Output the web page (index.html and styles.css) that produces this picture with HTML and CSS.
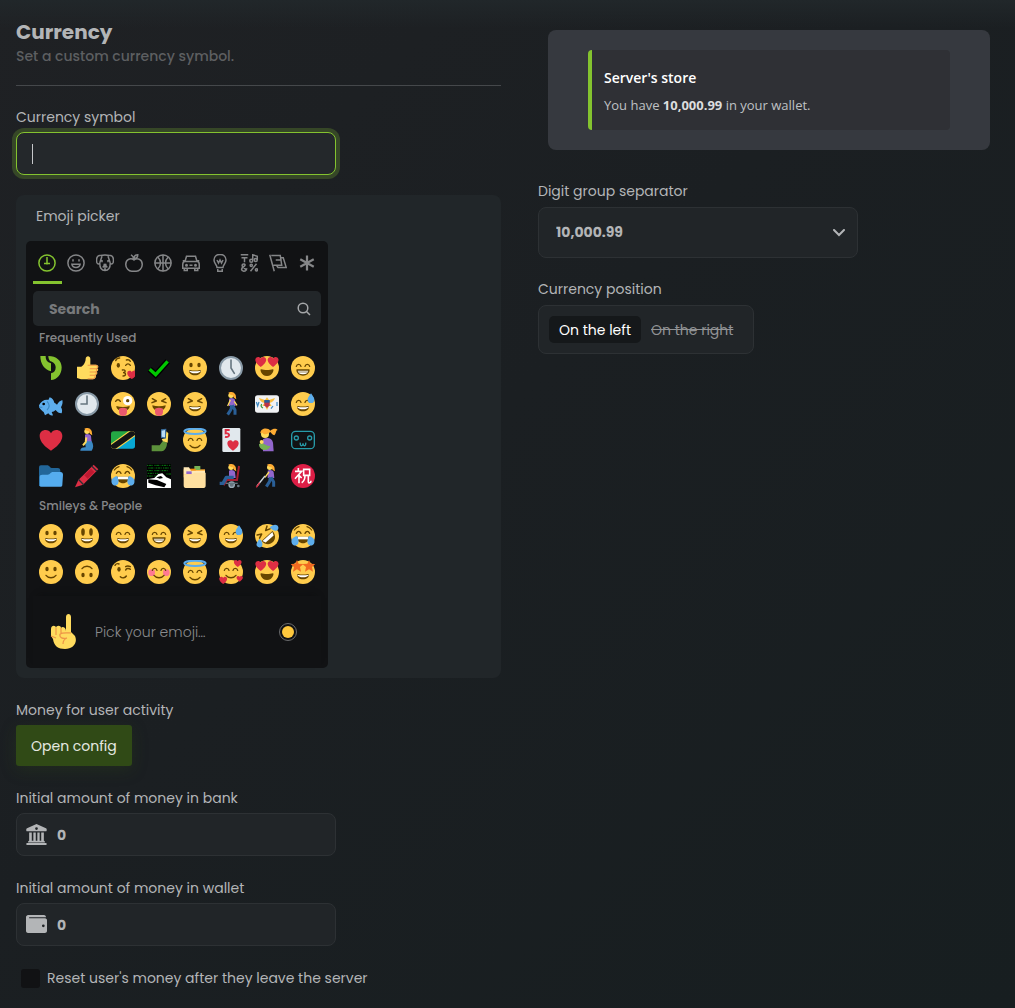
FILE: index.html
```html
<!DOCTYPE html>
<html lang="en">
<head>
<meta charset="utf-8">
<meta name="viewport" content="width=device-width, initial-scale=1">
<title>Currency</title>
<link rel="stylesheet" href="styles.css">
</head>
<body>
<svg class="sprite" aria-hidden="true">
  <defs>
    <g id="face"><circle cx="18" cy="18" r="18" fill="#ffcc4d"/></g>
    <g id="mouth">
      <path fill="#664500" d="M18 21.849c-2.966 0-4.935-.346-7.369-.819C10.075 20.923 9 21.03 9 22.394 9 25.12 12.400 29 18 29s9-3.880 9-6.606c0-1.364-1.075-1.471-1.631-1.364-2.435.473-4.403.819-7.369.819z"/>
      <path fill="#fff" d="M9 22s3 1 9 1 9-1 9-1-2 4-9 4-9-4-9-4z"/>
    </g>
    <g id="eyes" fill="#664500"><ellipse cx="12" cy="13.500" rx="2.500" ry="3.500"/><ellipse cx="24" cy="13.500" rx="2.500" ry="3.500"/></g>
    <g id="happy-eyes" fill="none" stroke="#664500" stroke-width="2" stroke-linecap="round"><path d="M8 15.500c1-4 6-4 7 0M21 15.500c1-4 6-4 7 0"/></g>
    <g id="squint-eyes" fill="none" stroke="#664500" stroke-width="2.200" stroke-linecap="round" stroke-linejoin="round"><path d="M8 10l6 3.500-6.500 2.500M28 10l-6 3.500 6.500 2.500"/></g>
    <g id="smile" fill="none" stroke="#664500" stroke-width="2" stroke-linecap="round"><path d="M10.500 23c3.500 4.800 11.500 4.800 15 0"/></g>
    <path id="heart" fill="#dd2e44" d="M18 34C10 29 1 21 1 12 1 2 14 0 18 8c4-8 17-6 17 4 0 9-9 17-17 22z"/>
    <path id="drop" fill="#5dadec" d="M30 2c-2.500 4-5 6.500-5 9.500a5 5 0 0 0 10 0C35 8.500 32.500 6 30 2z"/>
    <g id="halo" fill="none"><ellipse cx="18" cy="5" rx="16" ry="4" stroke="#5dadec" stroke-width="3"/></g>
    <path id="star" fill="#f26a21" d="M9 0l2.500 5.500 7 .500-5 4.500 1.500 7L9 14l-6 3.500 1.500-7L-1 6l7.500-.500z"/>
    <g id="woman">
      <circle cx="18" cy="5" r="4" fill="#ffdc5d"/>
      <path fill="#ffac33" d="M14 1c4-2 8-1 10 2 2 2 1 5 2 8-3-1-5-3-5-6-2 0-5-1-7-4z"/>
      <path fill="#9266cc" d="M15 10c3-2 8-1 9 2l1 9H15z"/>
    </g>
  </defs>

  <symbol id="e-logo" viewBox="0 0 36 36"><path fill="#84c32f" d="M2 0h8c0 6 2 9 8 11v12C8 20 2 12 2 0zM14 0c12 0 20 7 20 17 0 11-7 19-16 19V26c5-1 7-4 7-9s-4-8-8-9c-2-2-3-5-3-8z"/></symbol>
  <symbol id="e-thumb" viewBox="0 0 36 36"><path fill="#ffdb5e" d="M3 16h6c3-1 7-6 7-12 0-5 7-5 7 0v9h8c5 0 5 5 2 5 3 2 2 5-1 5 3 2 1 5-1 5 2 3-1 7-4 7H9l-6-2z"/><path fill="none" stroke="#ee9547" stroke-width="1.600" d="M19 14h13c3 1 2 5-1 5h-9M31 19c3 1 2 5-1 5h-8M31 24c2 1 1 5-2 5h-7M30 29c1 2-1 5-3 5h-8"/></symbol>
  <symbol id="e-kiss" viewBox="0 0 36 36"><use href="#face"/><ellipse cx="11" cy="14" rx="2.500" ry="3.500" fill="#664500"/><path fill="none" stroke="#664500" stroke-width="2" stroke-linecap="round" d="M22 14c2-3 5-3 7 0M7 7c1-3 4-4 6-4M23 6c3-1 5 0 6 2M17 21c6-1 5 4 1 4 5 0 5 5 0 5"/><use href="#heart" transform="translate(24 21) scale(.4)"/></symbol>
  <symbol id="e-check" viewBox="0 0 36 36"><path fill="none" stroke="#000" stroke-width="9" d="M4 20l9 8L31 8"/><path fill="none" stroke="#00c800" stroke-width="5" d="M4 20l9 8L31 8"/></symbol>
  <symbol id="e-grin" viewBox="0 0 36 36"><use href="#face"/><use href="#eyes"/><use href="#mouth"/></symbol>
  <symbol id="e-smiley" viewBox="0 0 36 36"><use href="#face"/><ellipse cx="12" cy="12" rx="2.700" ry="5.500" fill="#664500"/><ellipse cx="24" cy="12" rx="2.700" ry="5.500" fill="#664500"/><use href="#mouth"/></symbol>
  <symbol id="e-smile" viewBox="0 0 36 36"><use href="#face"/><use href="#happy-eyes"/><use href="#mouth"/></symbol>
  <symbol id="e-beam" viewBox="0 0 36 36"><use href="#face"/><use href="#happy-eyes"/><path fill="#fff" stroke="#664500" stroke-width="2" stroke-linejoin="round" d="M9 21h18c0 10-18 10-18 0z"/><path stroke="#664500" d="M10 24h16"/></symbol>
  <symbol id="e-laugh" viewBox="0 0 36 36"><use href="#face"/><use href="#squint-eyes"/><use href="#mouth"/></symbol>
  <symbol id="e-sweat" viewBox="0 0 36 36"><use href="#face"/><use href="#happy-eyes"/><use href="#mouth"/><use href="#drop"/></symbol>
  <symbol id="e-clock5" viewBox="0 0 36 36"><circle cx="18" cy="18" r="16.500" fill="#e1e8ed" stroke="#8899a6" stroke-width="3"/><path fill="none" stroke="#66757f" stroke-width="2.400" stroke-linecap="round" d="M18 6v12l5 8"/></symbol>
  <symbol id="e-clock9" viewBox="0 0 36 36"><circle cx="18" cy="18" r="16.500" fill="#e1e8ed" stroke="#8899a6" stroke-width="3"/><path fill="none" stroke="#66757f" stroke-width="2.400" stroke-linecap="round" d="M18 6v12H9"/></symbol>
  <symbol id="e-hearteyes" viewBox="0 0 36 36"><use href="#face"/><use href="#heart" transform="translate(0 0) scale(.48)"/><use href="#heart" transform="translate(18.500 0) scale(.48)"/><path fill="#664500" d="M9 20c5 1.500 13 1.500 18 0 2 0 0 10-9 10S7 20 9 20z"/></symbol>
  <symbol id="e-fish" viewBox="0 0 36 36"><path fill="#5dadec" d="M0 20c3-6 8-9 14-8l2-4c4 1 6 4 7 8 2 1 3 2 4 3 2-4 5-6 8-7 1 4 0 7-2 11 2 3 2 6 1 9-4 0-7-2-9-5-2 2-4 3-6 3l2 5c-3 1-6-1-7-3l-5 3-2-5C4 28 0 25 0 20z"/><circle cx="7" cy="18" r="2"/><path fill="none" stroke="#3b88c3" stroke-width="1.600" d="M12 14c4 4 4 9 0 13M0 23h5"/></symbol>
  <symbol id="e-winktongue" viewBox="0 0 36 36"><use href="#face"/><path fill="none" stroke="#664500" stroke-width="2.200" stroke-linecap="round" d="M7 14c2-3 5-3 7 0"/><circle cx="25" cy="13" r="7" fill="#fff"/><circle cx="25" cy="13" r="2.500" fill="#664500"/><path fill="#664500" d="M8 21c6 2 14 2 20 0 0 10-20 10-20 0z"/><path fill="#ea596e" d="M12 25c4-2 8-2 12 0v5c0 8-12 8-12 0z"/></symbol>
  <symbol id="e-tongue" viewBox="0 0 36 36"><use href="#face"/><use href="#squint-eyes"/><path fill="#664500" d="M8 20c6 2 14 2 20 0 0 11-20 11-20 0z"/><path fill="#ea596e" d="M12 25c4-2 8-2 12 0v5c0 8-12 8-12 0z"/></symbol>
  <symbol id="e-walk" viewBox="0 0 36 36"><use href="#woman"/><path fill="none" stroke="#2a5f97" stroke-width="4.500" stroke-linejoin="round" d="M19 20l-1 6-5 8M20 20l4 7v7"/><path fill="none" stroke="#ffdc5d" stroke-width="2" d="M17 12l-4 9M23 14l4 6"/></symbol>
  <symbol id="e-vi" viewBox="0 0 36 36"><rect y="5" width="36" height="26" rx="4" fill="#f1f2f4"/><path fill="#fbbe3c" d="M6 9l9 3 3-4 3 4 9-3c-2 5-5 7-8 7l3 5h-4l-3 6-3-6h-4l3-5c-4 0-6-2-8-7z"/><path fill="#b9324b" d="M14 13h8v7l-4 4-4-4z"/><path fill="#2a5f97" d="M14 12h8v4h-8z"/><path stroke="#3b88c3" stroke-width="1.800" fill="none" d="M2 15l2 6 2-6M33 15v6M24 25l3-4"/><path fill="none" stroke="#3f9b42" stroke-width="2" d="M10 18c-2 3 0 5 2 6"/></symbol>
  <symbol id="e-heart" viewBox="0 0 36 36"><use href="#heart"/></symbol>
  <symbol id="e-kneel" viewBox="0 0 36 36"><use href="#woman"/><path fill="#3b88c3" d="M15 20h10c3 5 3 10 0 14H8c0-4 4-5 8-5z"/><path fill="none" stroke="#ffdc5d" stroke-width="3" d="M17 14l-1 7-4 5"/></symbol>
  <symbol id="e-tz" viewBox="0 0 36 36"><clipPath id="flag"><rect y="5" width="36" height="26" rx="4"/></clipPath><g clip-path="url(#flag)"><path fill="#24a844" d="M0 0h36L0 30z"/><path fill="#08a8d4" d="M0 36h36V6z"/><path stroke="#fbd449" stroke-width="12" d="M-3 33L39 3"/><path stroke="#141414" stroke-width="8.500" d="M-3 33L39 3"/></g></symbol>
  <symbol id="e-selfie" viewBox="0 0 36 36"><path fill="#5c913b" d="M7 35V26h12l5-7 6 3c0 7-3 12-8 13z"/><path fill="#ffdc5d" d="M22 17l6-2 1-10 3 3-1 14-7-2z"/><path fill="#3b6f9f" d="M21 2l8-1-1 15-7-1z"/><path fill="#bbddf5" d="M22 4l5-1v11l-5-1z"/></symbol>
  <symbol id="e-angel" viewBox="0 0 36 36"><use href="#face"/><use href="#halo"/><g transform="translate(0 3)"><use href="#happy-eyes"/><use href="#smile"/></g></symbol>
  <symbol id="e-card" viewBox="0 0 36 36"><rect x="5" width="27" height="36" rx="2" fill="#e1e8ed"/><path fill="none" stroke="#dd2e44" stroke-width="3" d="M16 3h-6v5c7-1 7 7-1 5"/><use href="#heart" transform="translate(12 17) scale(.5)"/></symbol>
  <symbol id="e-feed" viewBox="0 0 36 36"><path fill="#9266cc" d="M12 17c6-4 14-2 15 5l1 13H12z"/><circle cx="15" cy="9" r="6" fill="#ffdc5d"/><path fill="#ffac33" d="M8 8C8-1 20-1 23 4c5-4 9-3 11-1-3 0-2 5-5 8-3-1-4-3-6-5-3 3-9 5-12 1z"/><path fill="#77b255" d="M6 24c7-4 9 3 17 3-2 9-17 8-17-3z"/><circle cx="10" cy="21" r="3" fill="#ffdc5d"/></symbol>
  <symbol id="e-robot" viewBox="0 0 36 36"><g fill="none" stroke="#279aa8" stroke-width="2"><rect x="1" y="5" width="34" height="26" rx="6"/><circle cx="8" cy="15" r="3"/><circle cx="28" cy="15" r="3"/><path d="M14 22c-1 6 4 6 4 1 0 5 5 5 4-1"/></g></symbol>
  <symbol id="e-folder" viewBox="0 0 36 36"><path fill="#226699" d="M0 33V6c0-3 1-4 3-4h9c4 0 4 4 7 4h9c3 0 4 2 4 4v23z"/><path fill="#55acee" d="M1 33V20c0-3 1-4 4-4h8c4 0 4-4 8-4h11c3 0 4 2 4 4l-1 15c0 2-1 3-3 3H3c-2 0-2-1-2-1z"/></symbol>
  <symbol id="e-crayon" viewBox="0 0 36 36"><path fill="#dd2e44" d="M0 35l5-11L28 1l7 7-23 23z"/><path fill="#be1931" d="M14 17l10-10 5 5-10 10z"/><path stroke="#292f33" stroke-width="2" d="M5 23l8 8M25 3l8 8"/></symbol>
  <symbol id="e-joy" viewBox="0 0 36 36"><use href="#face"/><path fill="none" stroke="#664500" stroke-width="2" stroke-linecap="round" d="M8 14c2-4 5-4 7 0M21 14c2-4 5-4 7 0M5 9c2-3 4-4 7-5M24 4c3 1 5 2 7 5"/><path fill="#664500" d="M9 19h18c1 13-19 13-18 0z"/><path fill="#fff" d="M10 19h16v4H10z"/><path fill="#5dadec" d="M9 18c-7 2-9 6-8 10 1 5 8 6 10 1 1-3 0-7-2-11zM27 18c7 2 9 6 8 10-1 5-8 6-10 1-1-3 0-7 2-11z"/></symbol>
  <symbol id="e-glitch" viewBox="0 0 36 36"><path d="M0 0h36v36H0z"/><path stroke="#087a12" stroke-width="1.500" stroke-dasharray="2 1 4 1 1 2" d="M0 2h36M2 6h34M0 10h33M1 14h16M0 18h15M29 15h7"/><path fill="#fff" d="M0 23l11-2 6-6 6-1 6 6 7 3v13H0z"/><path d="M2 23l13 1 14 6-3 5-13-3-11-4zM14 20l5 2 5-1-3-3z"/></symbol>
  <symbol id="e-dividers" viewBox="0 0 36 36"><path fill="#ffac33" d="M1 8h32v12H1z"/><path fill="#77b255" d="M17 3h9v6h-9z"/><path fill="#f4900c" d="M10 7h9v6h-9z"/><path fill="#ffe8b6" d="M1 5h8l3 5h21v6H1z"/><path fill="#9266cc" d="M5 11h8v4H5z"/><path fill="#ffe0a0" d="M1 16h12l4-3h17v19c0 3-1 4-3 4H4c-2 0-3-1-3-4z"/></symbol>
  <symbol id="e-chair" viewBox="0 0 36 36"><path fill="none" stroke="#a51c30" stroke-width="3" d="M30 3l-3 21H12l-5 8"/><use href="#woman"/><path fill="none" stroke="#2a5f97" stroke-width="5" stroke-linejoin="round" d="M22 20H11L6 29H1"/><circle cx="19" cy="31" r="4" fill="#66757f" stroke="#99aab5" stroke-width="2"/><circle cx="29" cy="33" r="2" fill="#66757f"/><path stroke="#66757f" stroke-width="2" d="M10 29h18"/></symbol>
  <symbol id="e-cane" viewBox="0 0 36 36"><g transform="translate(4 0)"><use href="#woman"/><path fill="none" stroke="#2a5f97" stroke-width="4.500" stroke-linejoin="round" d="M19 20l-1 6-5 8M20 20l4 7v7"/><path fill="none" stroke="#ffdc5d" stroke-width="2" d="M17 12l-6 8"/></g><path stroke="#ccd6dd" stroke-width="2" d="M15 18L3 33"/><path stroke="#dd2e44" stroke-width="2" d="M7 28l-5 7"/></symbol>
  <symbol id="e-congrats" viewBox="0 0 36 36"><circle cx="18" cy="18" r="18" fill="#dd1e46"/><g fill="none" stroke="#fff" stroke-width="2.400"><path d="M11 6v4M6 11h10L6 22M12 16v13M12 17l4 4M19 8h9v9h-9zM21 17c0 6-1 9-5 11M26 17v10c0 2 4 2 4-2"/></g></symbol>
  <symbol id="e-rofl" viewBox="0 0 36 36"><g transform="rotate(-42 18 18)"><use href="#face"/><g transform="translate(0 -3)"><use href="#squint-eyes"/></g><path fill="#664500" d="M7 18h22c0 17-22 17-22 0z"/><path fill="#fff" d="M8 19h20l-2 5H10z"/></g><path fill="#5dadec" d="M7 22c-3 4-6 8-4 11 2 3 7 3 8-1 1-3-1-7-4-10zM22 5c4-3 8-5 11-3 3 2 3 7-1 8-3 1-7-2-10-5z"/></symbol>
  <symbol id="e-slight" viewBox="0 0 36 36"><use href="#face"/><use href="#eyes"/><use href="#smile"/></symbol>
  <symbol id="e-upside" viewBox="0 0 36 36"><g transform="rotate(180 18 18)"><use href="#face"/><use href="#eyes"/><use href="#smile"/></g></symbol>
  <symbol id="e-wink" viewBox="0 0 36 36"><use href="#face"/><ellipse cx="12" cy="14" rx="2.500" ry="3.500" fill="#664500"/><path fill="none" stroke="#664500" stroke-width="2.200" stroke-linecap="round" d="M22 15c1-3 5-3 7-1M6 8c1-2 4-3 6-2M22 10c3-2 5-1 7 0M14 25c3 3 7 2 9-1"/></symbol>
  <symbol id="e-blush" viewBox="0 0 36 36"><use href="#face"/><circle cx="7" cy="19" r="5" fill="#ff7892"/><circle cx="29" cy="19" r="5" fill="#ff7892"/><use href="#happy-eyes"/><use href="#smile"/></symbol>
  <symbol id="e-love" viewBox="0 0 36 36"><use href="#face"/><use href="#happy-eyes"/><use href="#smile"/><use href="#heart" transform="translate(22 -1) scale(.34)"/><use href="#heart" transform="translate(0 24) scale(.35)"/><use href="#heart" transform="translate(26 23) scale(.28)"/></symbol>
  <symbol id="e-stars" viewBox="0 0 36 36"><use href="#face"/><use href="#star"/><use href="#star" transform="translate(18 0)"/><use href="#mouth"/></symbol>
  <symbol id="e-point" viewBox="0 0 36 36"><path fill="#ffdb5e" d="M20 17V3c0-4 5-4 5 0v15l4 4c3 7-2 13-10 13C12 35 8 32 7 25l-2-3v-7c0-4 5-4 5-1 0-3 5-3 5 0 1-2 5-1 5 3z"/><path fill="none" stroke="#ee9547" stroke-width="1.200" d="M10 14v7M15 14v6M14 20c3-2 9-1 11-1M14 20c-1 4 3 5 7 4-3 1-4 3-4 6M5 22l5 2"/></symbol>
</svg>

<main class="settings">
  <section class="column">
    <header class="heading">
      <h1 class="title">Currency</h1>
      <p class="subtitle">Set a custom currency symbol.</p>
    </header>

    <div class="field field-first">
      <label class="label" for="symbol">Currency symbol</label>
      <input class="control symbol" id="symbol" type="text">
    </div>

    <div class="panel">
      <h2 class="panel-title">Emoji picker</h2>
      <div class="picker">
        <nav class="tabs" aria-label="Emoji categories">
          <button class="tab tab-active" aria-label="Frequently used"><svg viewBox="0 0 24 24"><circle cx="12" cy="12" r="10.800"/><path d="M12 4v10M8 12.500h8"/></svg></button>
          <button class="tab" aria-label="Smileys"><svg viewBox="0 0 24 24"><circle cx="12" cy="12" r="10.800"/><path d="M8 7v3M16 7v3M6.500 13.500h11c-1 6-10 6-11 0z"/></svg></button>
          <button class="tab" aria-label="Animals"><svg viewBox="0 0 24 24"><path d="M6 2C2 1 0 6 1 11c1 3 3 3 4 1L8 3M18 2c4-1 6 4 5 9-1 3-3 3-4 1l-3-9M6 2c4-1 8-1 12 0M5 12c0 7 3 10 7 10s7-3 7-10M8 8v3M16 8v3M9 18l3-4 3 4M12 14v8M10 14h4"/></svg></button>
          <button class="tab" aria-label="Food"><svg viewBox="0 0 24 24"><path d="M12 8c-5-4-11 0-11 6 0 5 4 9 8 9 2 0 4 0 6 0 4 0 8-4 8-9 0-6-6-10-11-6zM12 8c0-3-1-5-4-7M12 6c0-3 2-5 5-5 0 3-2 5-5 5z"/></svg></button>
          <button class="tab" aria-label="Sports"><svg viewBox="0 0 24 24"><circle cx="12" cy="12" r="10.800"/><path d="M12 1v22M1 12h22M5 4c5 5 5 11 0 16M19 4c-5 5-5 11 0 16"/></svg></button>
          <button class="tab" aria-label="Travel"><svg viewBox="0 0 24 24"><path d="M4 10L6 3h12l2 7c2 0 3 2 3 4v5H1v-5c0-2 1-4 3-4zM4 10h16M1 9h3M20 9h3M3 19v3h4v-3M17 19v3h4v-3M10 15h4"/><circle cx="6" cy="15" r="1"/><circle cx="18" cy="15" r="1"/></svg></button>
          <button class="tab" aria-label="Objects"><svg viewBox="0 0 24 24"><path d="M8 18c0-4-4-5-4-10 0-10 16-10 16 0 0 5-4 6-4 10zM9 20v3h6v-3M8 8l2 4 2-4 2 4 2-4"/></svg></button>
          <button class="tab" aria-label="Symbols"><svg viewBox="0 0 24 24"><path d="M1 1h10M2 5h8M6 5v6M17 8V1l6 2v5M9 22L3 16c-1-4 6-3 3 0-5 3-5 6-1 7 3 0 4-3 4-4M14 23l8-10"/><circle cx="15" cy="9" r="2"/><circle cx="21" cy="8" r="2"/><circle cx="15" cy="15" r="1.500"/><circle cx="22" cy="21" r="1.500"/></svg></button>
          <button class="tab" aria-label="Flags"><svg viewBox="0 0 24 24"><path d="M1 1l6 22M3 2h12l2 13H6M15 5h4l4 13H12l-2-3M9 8h8"/></svg></button>
          <button class="tab" aria-label="Custom"><svg class="bold" viewBox="0 0 24 24"><path d="M12 2v20M3 7l18 10M21 7L3 17"/></svg></button>
        </nav>
        <div class="search">
          <input class="search-input" type="search" placeholder="Search" aria-label="Search emoji">
          <svg class="search-icon" viewBox="0 0 14 14"><circle cx="6" cy="6" r="4.800"/><path d="M9.500 9.500L13 13"/></svg>
        </div>
        <h3 class="group">Frequently Used</h3>
        <div class="grid">
          <button class="emoji" aria-label="logo"><svg><use href="#e-logo"/></svg></button>
          <button class="emoji" aria-label="thumbs up"><svg><use href="#e-thumb"/></svg></button>
          <button class="emoji" aria-label="kiss"><svg><use href="#e-kiss"/></svg></button>
          <button class="emoji" aria-label="check"><svg><use href="#e-check"/></svg></button>
          <button class="emoji" aria-label="grinning"><svg><use href="#e-grin"/></svg></button>
          <button class="emoji" aria-label="five o'clock"><svg><use href="#e-clock5"/></svg></button>
          <button class="emoji" aria-label="heart eyes"><svg><use href="#e-hearteyes"/></svg></button>
          <button class="emoji" aria-label="beaming"><svg><use href="#e-beam"/></svg></button>
          <button class="emoji" aria-label="fish"><svg><use href="#e-fish"/></svg></button>
          <button class="emoji" aria-label="nine o'clock"><svg><use href="#e-clock9"/></svg></button>
          <button class="emoji" aria-label="winking tongue"><svg><use href="#e-winktongue"/></svg></button>
          <button class="emoji" aria-label="squinting tongue"><svg><use href="#e-tongue"/></svg></button>
          <button class="emoji" aria-label="laughing"><svg><use href="#e-laugh"/></svg></button>
          <button class="emoji" aria-label="woman walking"><svg><use href="#e-walk"/></svg></button>
          <button class="emoji" aria-label="Virgin Islands flag"><svg><use href="#e-vi"/></svg></button>
          <button class="emoji" aria-label="sweat smile"><svg><use href="#e-sweat"/></svg></button>
          <button class="emoji" aria-label="heart"><svg><use href="#e-heart"/></svg></button>
          <button class="emoji" aria-label="woman kneeling"><svg><use href="#e-kneel"/></svg></button>
          <button class="emoji" aria-label="Tanzania flag"><svg><use href="#e-tz"/></svg></button>
          <button class="emoji" aria-label="selfie"><svg><use href="#e-selfie"/></svg></button>
          <button class="emoji" aria-label="halo"><svg><use href="#e-angel"/></svg></button>
          <button class="emoji" aria-label="five of hearts"><svg><use href="#e-card"/></svg></button>
          <button class="emoji" aria-label="feeding baby"><svg><use href="#e-feed"/></svg></button>
          <button class="emoji" aria-label="robot"><svg><use href="#e-robot"/></svg></button>
          <button class="emoji" aria-label="folder"><svg><use href="#e-folder"/></svg></button>
          <button class="emoji" aria-label="crayon"><svg><use href="#e-crayon"/></svg></button>
          <button class="emoji" aria-label="joy"><svg><use href="#e-joy"/></svg></button>
          <button class="emoji" aria-label="hacker"><svg><use href="#e-glitch"/></svg></button>
          <button class="emoji" aria-label="dividers"><svg><use href="#e-dividers"/></svg></button>
          <button class="emoji" aria-label="woman in wheelchair"><svg><use href="#e-chair"/></svg></button>
          <button class="emoji" aria-label="woman with cane"><svg><use href="#e-cane"/></svg></button>
          <button class="emoji" aria-label="congratulations"><svg><use href="#e-congrats"/></svg></button>
        </div>
        <h3 class="group">Smileys &amp; People</h3>
        <div class="grid">
          <button class="emoji" aria-label="grinning"><svg><use href="#e-grin"/></svg></button>
          <button class="emoji" aria-label="smiley"><svg><use href="#e-smiley"/></svg></button>
          <button class="emoji" aria-label="smile"><svg><use href="#e-smile"/></svg></button>
          <button class="emoji" aria-label="beaming"><svg><use href="#e-beam"/></svg></button>
          <button class="emoji" aria-label="laughing"><svg><use href="#e-laugh"/></svg></button>
          <button class="emoji" aria-label="sweat smile"><svg><use href="#e-sweat"/></svg></button>
          <button class="emoji" aria-label="rolling"><svg><use href="#e-rofl"/></svg></button>
          <button class="emoji" aria-label="joy"><svg><use href="#e-joy"/></svg></button>
          <button class="emoji" aria-label="slight smile"><svg><use href="#e-slight"/></svg></button>
          <button class="emoji" aria-label="upside down"><svg><use href="#e-upside"/></svg></button>
          <button class="emoji" aria-label="wink"><svg><use href="#e-wink"/></svg></button>
          <button class="emoji" aria-label="blush"><svg><use href="#e-blush"/></svg></button>
          <button class="emoji" aria-label="halo"><svg><use href="#e-angel"/></svg></button>
          <button class="emoji" aria-label="smiling with hearts"><svg><use href="#e-love"/></svg></button>
          <button class="emoji" aria-label="heart eyes"><svg><use href="#e-hearteyes"/></svg></button>
          <button class="emoji" aria-label="star struck"><svg><use href="#e-stars"/></svg></button>
        </div>
        <div class="preview">
          <svg class="preview-emoji"><use href="#e-point"/></svg>
          <span class="preview-text">Pick your emoji…</span>
          <button class="tone" aria-label="Skin tone"></button>
        </div>
      </div>
    </div>

    <div class="field">
      <span class="label">Money for user activity</span>
      <button class="open-config">Open config</button>
    </div>

    <div class="field">
      <label class="label" for="bank">Initial amount of money in bank</label>
      <div class="control with-icon">
        <svg class="icon" viewBox="0 0 20 20"><path fill-rule="evenodd" d="M10 0l9 4c1 0 1 3 0 3H1C0 7 0 4 1 4zM10 3a1.300 1.300 0 1 0 0 2.600A1.300 1.300 0 0 0 10 3zM3 8h2.500v8H7V8h2.300v8h1.500V8H13v8h1.500V8H17v8c1 0 1 1 1 1.500H2c0-.500 0-1.500 1-1.500zM1 18h18c1 0 1 2 0 2H1c-1 0-1-2 0-2z"/></svg>
        <input class="amount" id="bank" type="text" inputmode="numeric" value="0">
      </div>
    </div>

    <div class="field">
      <label class="label" for="wallet">Initial amount of money in wallet</label>
      <div class="control with-icon">
        <svg class="icon" viewBox="0 0 20 20"><path fill-rule="evenodd" d="M2 1h15c1.500 0 2 1 2 2H3v1h15c1.500 0 2 1 2 2v10c0 1.500-1 2-2 2H2c-1.500 0-2-1-2-2V3c0-1 1-2 2-2zM16.500 10a1.300 1.300 0 1 0 0 2.600 1.300 1.300 0 0 0 0-2.600z"/></svg>
        <input class="amount" id="wallet" type="text" inputmode="numeric" value="0">
      </div>
    </div>

    <label class="check-row"><input class="check" type="checkbox">Reset user's money after they leave the server</label>
  </section>

  <section class="column column-side">
    <div class="message">
      <article class="embed">
        <h2 class="embed-title">Server's store</h2>
        <p class="embed-text">You have <strong>10,000.99</strong> in your wallet.</p>
      </article>
    </div>

    <div class="field field-side">
      <label class="label" for="separator">Digit group separator</label>
      <div class="select-wrap">
        <select class="control select" id="separator"><option>10,000.99</option></select>
        <svg class="chevron" viewBox="0 0 12 8"><path d="M1 1l5 5 5-5"/></svg>
      </div>
    </div>

    <div class="field field-side">
      <span class="label" id="position-label">Currency position</span>
      <div class="segment" role="group" aria-labelledby="position-label">
        <button class="option option-active" aria-pressed="true">On the left</button>
        <button class="option" aria-pressed="false">On the right</button>
      </div>
    </div>
  </section>
</main>
</body>
</html>
```

FILE: styles.css
```css
* { box-sizing: border-box; }

body {
  margin: 0;
  min-height: 100vh;
  color: #b3b5b7;
  background:
    linear-gradient(180deg, #21272a, transparent 28px),
    linear-gradient(135deg, #1f2124 0%, #1b1f22 45%, #171e20 100%);
  font-family: Poppins, Inter, "Liberation Sans", sans-serif;
  font-size: 14px;
  line-height: 20px;
}

button, input, select { font: inherit; color: inherit; }
button { padding: 0; border: 0; background: none; cursor: pointer; }
h1, h2, h3, p { margin: 0; }

.sprite { position: absolute; width: 0; height: 0; }

.settings {
  display: grid;
  grid-template-columns: 485fr 462fr;
  gap: 37px;
  padding: 20px 15px 20px 16px;
}
.column { display: flex; flex-direction: column; align-items: stretch; }
.column-side { padding-top: 10px; }

.heading { padding-bottom: 17px; border-bottom: 1px solid #45484b; }
.title { font-size: 20px; line-height: 24px; font-weight: 700; color: #b3b5b7; }
.subtitle { line-height: 24px; font-weight: 500; color: #5d5f61; }

.field { display: flex; flex-direction: column; align-items: flex-start; gap: 5px; margin-top: 22px; }
.field-first { margin-top: 21px; }
.field-side { margin-top: 21px; gap: 6px; }
.message + .field-side { margin-top: 31px; }

.control {
  width: 320px;
  max-width: 100%;
  height: 43px;
  border: 1px solid #2d3134;
  border-radius: 8px;
  background: #212528;
}
.symbol {
  padding: 0 16px;
  border-color: #84c32f;
  outline: 0;
  box-shadow: 0 0 0 4px #364727;
  background: #24282b linear-gradient(#c6c8ca, #c6c8ca) 15px center / 1px 20px no-repeat;
}

.panel { margin-top: 20px; padding: 10px; border-radius: 8px; background: #212629; }
.panel-title { padding: 1px 10px 15px; font-size: 14px; line-height: 20px; font-weight: 400; }
.picker { width: 302px; padding: 0 7px; border-radius: 5px; background: #111214; }

.tabs { display: flex; margin-bottom: 7px; }
.tab { flex: 1; height: 43px; display: grid; place-items: center; border-bottom: 3px solid transparent; color: #858688; padding-top: 3px; }
.tab-active { border-color: #84c32f; color: #84c32f; }
.tab svg { width: 18px; height: 18px; fill: none; stroke: currentColor; stroke-width: 2; }
.tab .bold { stroke-width: 3; }

.search { display: flex; align-items: center; height: 35px; padding: 0 10px 0 16px; border-radius: 5px; background: #222629; }
.search-input { flex: 1; min-width: 0; padding: 0; border: 0; outline: 0; background: none; font-weight: 700; appearance: none; }
.search-input::placeholder { color: #77797b; opacity: 1; }
.search-icon { width: 14px; height: 14px; fill: none; stroke: #a5a7a9; stroke-width: 1.5; }

.group { padding-left: 6px; font-size: 12px; line-height: 24px; font-weight: 500; color: #858688; }
.grid { display: grid; grid-template-columns: repeat(8, 1fr); grid-auto-rows: 36px; }
.emoji { display: grid; place-items: center; }
.emoji svg { width: 24px; height: 24px; }

.preview { display: flex; align-items: center; gap: 13px; height: 72px; margin-top: 6px; padding: 0 24px 0 13px; box-shadow: 0 -4px 8px -6px #0a0b0c; }
.preview-emoji { width: 36px; height: 36px; }
.preview-text { flex: 1; color: #8a8b8d; font-weight: 300; }
.tone { width: 18px; height: 18px; border: 1px solid #6a6b6d; border-radius: 50%; background: #ffc83d; background-clip: content-box; padding: 2px; }

.open-config { height: 41px; padding: 0 15px; border-radius: 3px; background: #304a16; color: #e6e9e2; box-shadow: 0 4px 16px rgba(48, 74, 22, .3); }

.with-icon { display: flex; align-items: center; gap: 10px; padding: 0 9px; }
.icon { width: 21px; height: 21px; fill: #b3b5b7; }
.amount { flex: 1; min-width: 0; padding: 0; border: 0; outline: 0; background: none; font-weight: 700; }

.check-row { display: flex; align-items: center; gap: 7px; margin-top: 22px; padding-left: 5px; }
.check { appearance: none; width: 19px; height: 19px; margin: 0; border-radius: 3px; background: #111214; }

.message { margin: 0 10px; padding: 20px 40px; border-radius: 8px; background: #36393f; }
.embed { height: 80px; padding: 17px 12px; border-left: 4px solid #84c32f; border-radius: 4px; background: #2f3035; font-family: "Open Sans", "Noto Sans", sans-serif; }
.embed-title { font-size: 14px; line-height: 22px; font-weight: 600; color: #fff; }
.embed-text { margin-top: 6px; font-size: 13px; line-height: 20px; color: #bfc1c4; }
.embed-text strong { color: #dcddde; }

.select-wrap { display: grid; align-items: center; width: 320px; max-width: 100%; }
.select { grid-area: 1 / 1; height: 51px; padding: 0 17px 2px; appearance: none; font-weight: 700; }
.chevron { grid-area: 1 / 1; justify-self: end; width: 12px; height: 8px; margin-right: 13px; fill: none; stroke: #b3b5b7; stroke-width: 2; stroke-linecap: round; pointer-events: none; }

.segment { display: flex; align-items: center; height: 49px; padding: 0 10px; border: 1px solid #2d3134; border-radius: 8px; background: #212528; }
.option { height: 27px; padding: 0 10px; border-radius: 5px; color: #919395; text-decoration: line-through; }
.option-active { background: #15181a; color: #fff; text-decoration: none; }
```
